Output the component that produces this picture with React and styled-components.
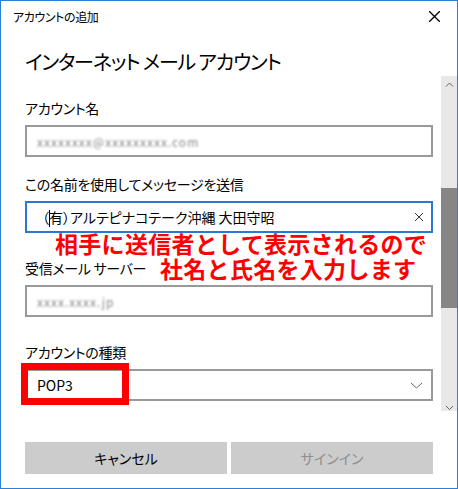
import React from "react";
import styled, { createGlobalStyle } from "styled-components";

const GlobalStyle = createGlobalStyle`
  html, body {
    margin: 0;
    padding: 0;
    background: #fff;
  }
  body {
    font-family: "Noto Sans CJK JP", "Noto Sans", sans-serif;
    font-feature-settings: "palt";
    color: #000;
  }
`;

const Window = styled.div`
  position: relative;
  width: 458px;
  height: 489px;
  box-sizing: border-box;
  border: 1px solid #2b7fd6;
  background: #fff;
  display: flex;
  flex-direction: column;
  overflow: hidden;
`;

const TitleBar = styled.div`
  height: 30px;
  display: flex;
  align-items: center;
  justify-content: space-between;
  padding: 0 17px 0 12px;
  font-size: 12px;
  letter-spacing: -0.4px;
`;

const Heading = styled.h1`
  margin: 17px 0 0;
  padding-left: 24px;
  font-size: 20px;
  line-height: 28px;
  font-weight: 400;
  letter-spacing: -1.2px;
`;

const Body = styled.div`
  height: 335px;
  display: flex;
`;

const Content = styled.div`
  flex: 1;
  padding: 0 8px 0 24px;
  overflow: hidden;
`;

const Field = styled.div`
  margin-top: ${(p) => p.top}px;
  position: relative;
`;

const Label = styled.div`
  font-size: 14px;
  line-height: 20px;
  margin-bottom: 7px;
  letter-spacing: -0.3px;
`;

const Box = styled.div`
  height: 32px;
  box-sizing: border-box;
  border: 2px solid ${(p) => (p.focused ? "#2a78d3" : "#999")};
  display: flex;
  align-items: center;
  justify-content: space-between;
  padding: 0 8px 0 10px;
  font-size: 14px;
`;

const Value = styled.span`
  padding-left: ${(p) => p.indent || 0}px;
`;

const Blurred = styled.span`
  color: #8a8a8a;
  filter: blur(1.3px);
  letter-spacing: 1px;
  font-size: 12px;
`;

const Caret = styled.span`
  display: inline-block;
  width: 1px;
  height: 17px;
  background: #000;
  vertical-align: middle;
  margin: 0 -1px 0 0;
`;

const Highlight = styled.div`
  position: absolute;
  left: -4px;
  bottom: -4px;
  width: 108px;
  height: 42px;
  box-sizing: border-box;
  border: 7px solid #ff0000;
`;

const Scrollbar = styled.div`
  width: 16px;
  background: #e8e8e8;
  display: flex;
  flex-direction: column;
`;

const ArrowBtn = styled.div`
  height: ${(p) => p.h}px;
  display: flex;
  justify-content: center;
  align-items: ${(p) => (p.down ? "flex-end" : "center")};
  padding-bottom: ${(p) => (p.down ? 1 : 0)}px;
  box-sizing: border-box;
`;

const Track = styled.div`
  flex: 1;
  padding-top: 95px;
`;

const Thumb = styled.div`
  height: 120px;
  background: #868686;
`;

const Footer = styled.div`
  display: flex;
  gap: 4px;
  padding: 31px 0 0 24px;
`;

const Button = styled.div`
  width: 202px;
  height: 32px;
  background: #cccccc;
  display: flex;
  align-items: center;
  justify-content: center;
  font-size: 14px;
  color: ${(p) => (p.disabled ? "#8f8f8f" : "#000")};
`;

const Annotation = styled.div`
  position: absolute;
  left: 54px;
  top: 230px;
  color: #ff0000;
  font-size: 23px;
  font-weight: 700;
  line-height: 25px;
  font-feature-settings: normal;
  letter-spacing: 0.3px;
`;

const AnnLine = styled.div`
  padding-left: ${(p) => p.indent || 0}px;
`;

const Chevron = ({ up, w = 8, h = 4, color = "#606060" }) => (
  <svg width={w + 2} height={h + 2} viewBox={`-1 -1 ${w + 2} ${h + 2}`}>
    <path
      d={up ? `M0 ${h} L${w / 2} 0 L${w} ${h}` : `M0 0 L${w / 2} ${h} L${w} 0`}
      fill="none"
      stroke={color}
      strokeWidth="1"
    />
  </svg>
);

const Cross = ({ size = 10, width = 1.2, color = "#000" }) => (
  <svg width={size} height={size} viewBox={`0 0 ${size} ${size}`}>
    <path
      d={`M0 0 L${size} ${size} M${size} 0 L0 ${size}`}
      stroke={color}
      strokeWidth={width}
    />
  </svg>
);

export default function App() {
  return (
    <>
      <GlobalStyle />
      <Window>
        <TitleBar>
          <span>アカウントの追加</span>
          <Cross size={11} width={1.3} />
        </TitleBar>
        <Heading>インターネット メール アカウント</Heading>
        <Body>
          <Content>
            <Field top={22}>
              <Label>アカウント名</Label>
              <Box>
                <Blurred>xxxxxxxx@xxxxxxxxx.com</Blurred>
              </Box>
            </Field>
            <Field top={17}>
              <Label>この名前を使用してメッセージを送信</Label>
              <Box focused>
                <Value indent={5}>
                  （<Caret />有）アルテピナコテーク沖縄 大田守昭
                </Value>
                <Cross size={8} width={1} color="#333" />
              </Box>
            </Field>
            <Field top={25}>
              <Label>受信メール サーバー</Label>
              <Box>
                <Blurred>xxxx.xxxx.jp</Blurred>
              </Box>
            </Field>
            <Field top={25}>
              <Label>アカウントの種類</Label>
              <Box>
                <span>POP3</span>
                <Chevron w={11} h={5} color="#666" />
              </Box>
              <Highlight />
            </Field>
          </Content>
          <Scrollbar>
            <ArrowBtn h={17}>
              <Chevron up w={7} h={3.5} />
            </ArrowBtn>
            <Track>
              <Thumb />
            </Track>
            <ArrowBtn h={12} down>
              <Chevron w={7} h={3.5} />
            </ArrowBtn>
          </Scrollbar>
        </Body>
        <Footer>
          <Button>キャンセル</Button>
          <Button disabled>サインイン</Button>
        </Footer>
        <Annotation>
          <AnnLine>相手に送信者として表示されるので</AnnLine>
          <AnnLine indent={105}>社名と氏名を入力します</AnnLine>
        </Annotation>
      </Window>
    </>
  );
}
